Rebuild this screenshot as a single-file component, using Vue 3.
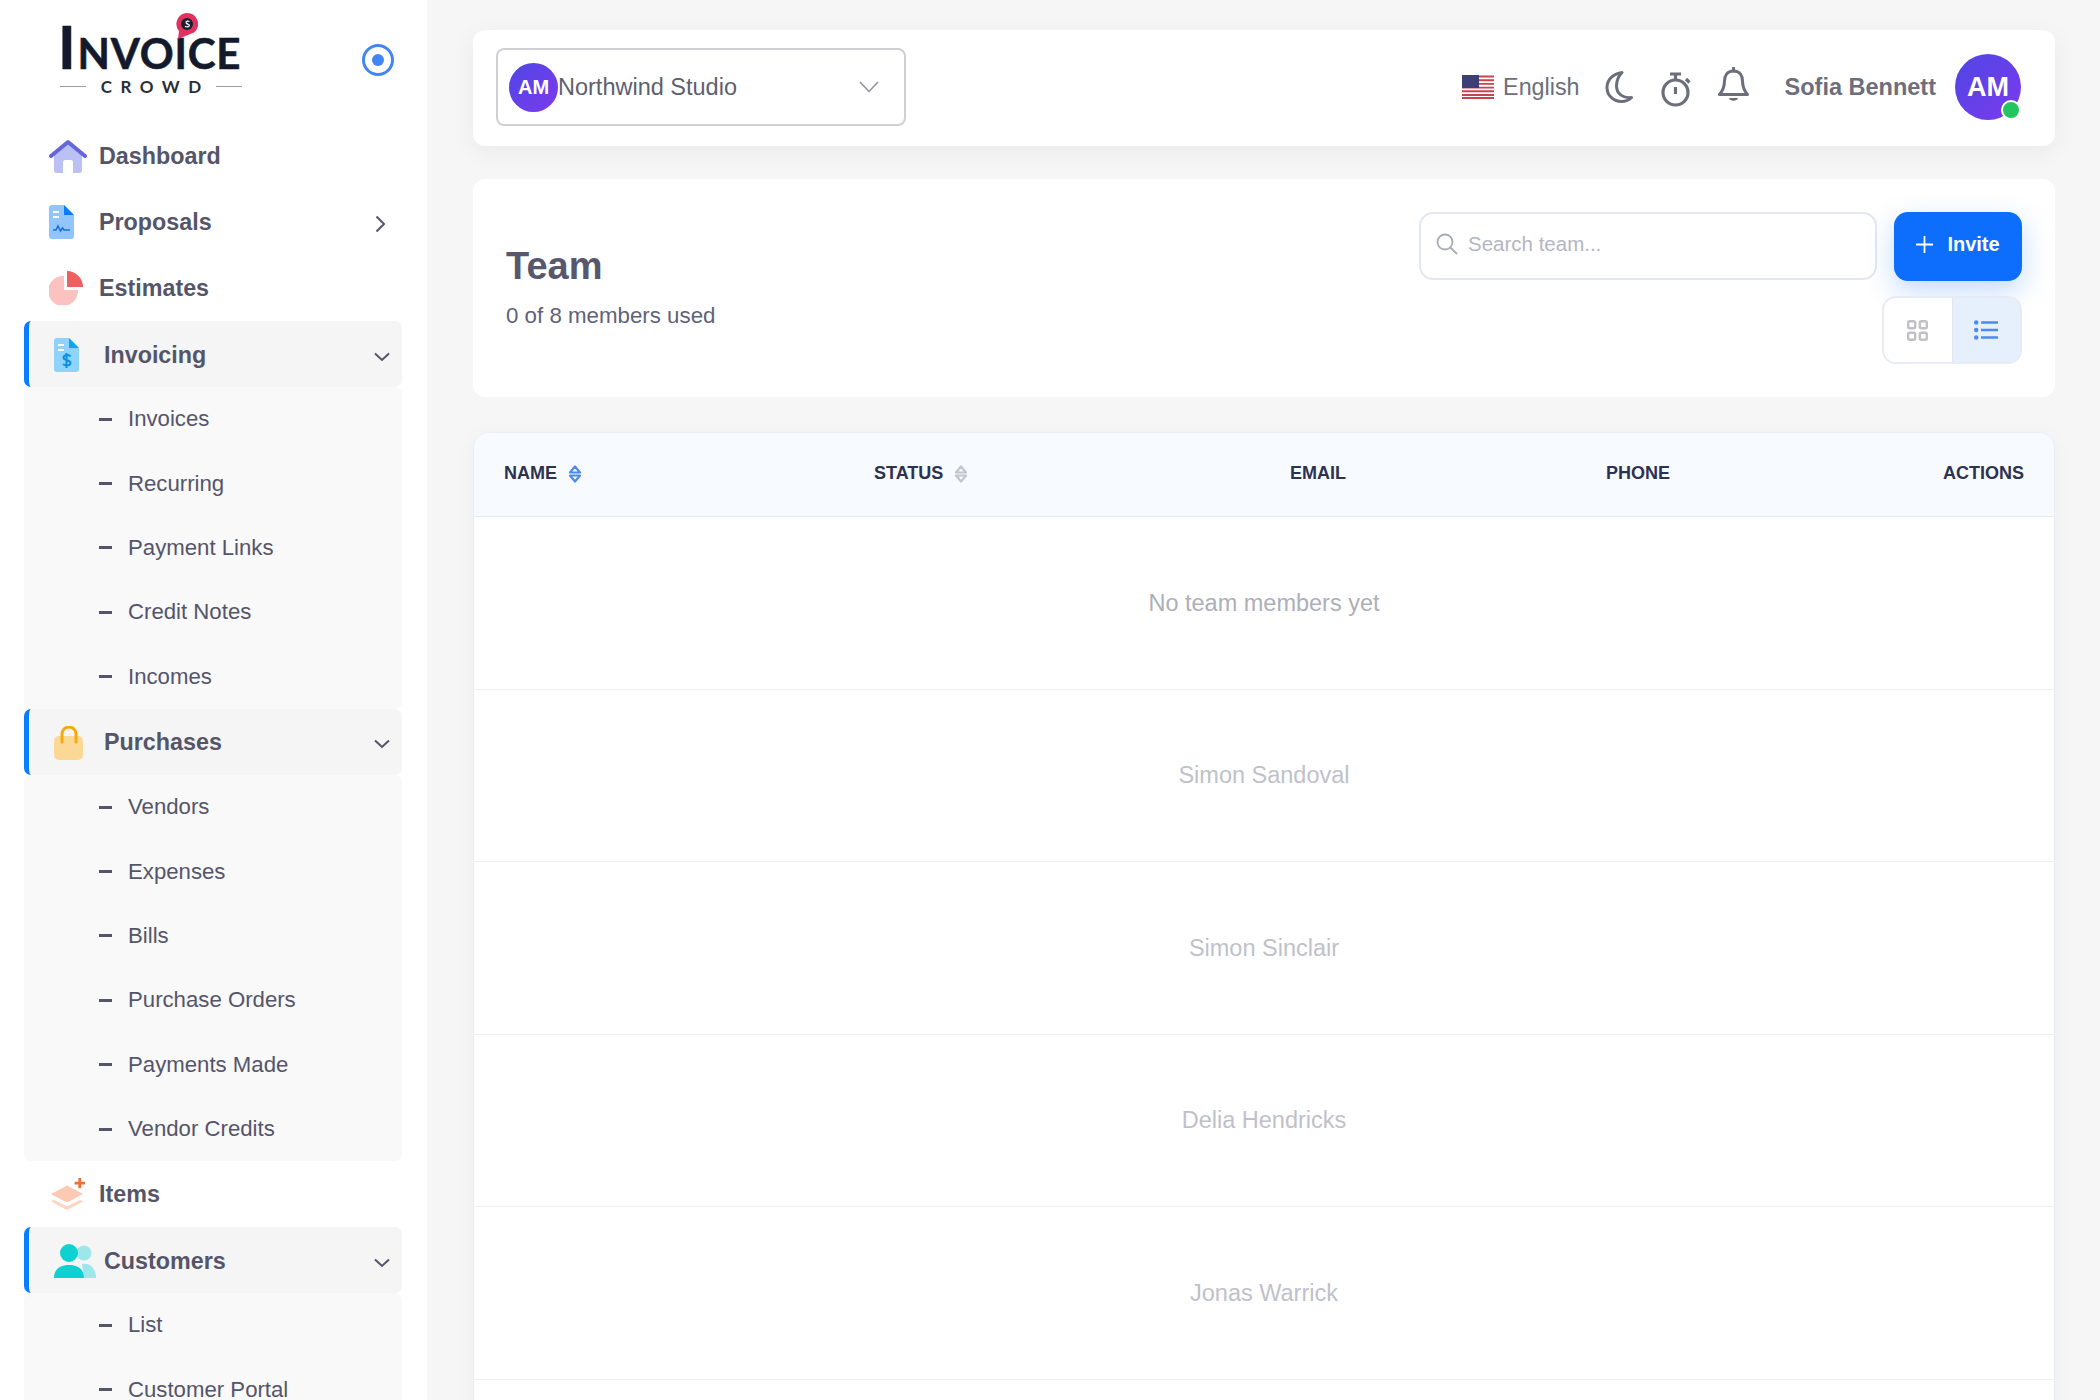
<script setup>
const nav = [
  { name: 'Dashboard', icon: 'home' },
  { name: 'Proposals', icon: 'proposal', arrow: true },
  { name: 'Estimates', icon: 'pie' },
  { name: 'Invoicing', icon: 'invoice', subs: ['Invoices', 'Recurring', 'Payment Links', 'Credit Notes', 'Incomes'] },
  { name: 'Purchases', icon: 'bag', subs: ['Vendors', 'Expenses', 'Bills', 'Purchase Orders', 'Payments Made', 'Vendor Credits'] },
  { name: 'Items', icon: 'layers' },
  { name: 'Customers', icon: 'users', subs: ['List', 'Customer Portal'] },
]

const rows = ['No team members yet', 'Simon Sandoval', 'Simon Sinclair', 'Delia Hendricks', 'Jonas Warrick', '']
</script>

<template>
  <div class="page">
    <aside class="sidebar">
      <div class="brand">
        <div class="logo">
          <svg class="pin" width="22" height="26" viewBox="0 0 22 26">
            <path d="M11 0a11 11 0 0 1 7 19.5L2 26l1-8A11 11 0 0 1 11 0z" fill="#e0315f" />
            <circle cx="11" cy="11" r="6" fill="#1b2030" />
            <path d="M13.5 8.500c-2-1-4 0-3.200 1.600.7 1.200 3.400.8 3 2.600-.4 1.500-3 1.400-4.300.5" fill="none" stroke="#fff" stroke-width="1.300" />
          </svg>
          <div class="logo-word"><span class="big">I</span>NVOICE</div>
          <div class="logo-sub"><i></i><span>CROWD</span><i></i></div>
        </div>
        <svg class="radio" width="34" height="34" viewBox="0 0 34 34">
          <circle cx="17" cy="17" r="14.500" fill="none" stroke="#4285f4" stroke-width="3" />
          <circle cx="17" cy="17" r="6" fill="#4285f4" />
        </svg>
      </div>

      <nav class="menu">
        <div v-for="item in nav" :key="item.name">
          <div class="row" :class="{ open: item.subs }">
            <span class="ico">
              <svg v-if="item.icon === 'home'" width="38" height="34" viewBox="0 0 38 34">
                <path d="M5 15 19 4l14 11v16a3 3 0 0 1-3 3h-6V23a2 2 0 0 0-2-2h-6a2 2 0 0 0-2 2v11H8a3 3 0 0 1-3-3z" fill="#bcc1f5" />
                <path d="M2 17 19 3l17 14" fill="none" stroke="#6467dc" stroke-width="4" stroke-linecap="round" stroke-linejoin="round" />
              </svg>
              <svg v-else-if="item.icon === 'proposal'" width="25" height="34" viewBox="0 0 25 34">
                <path d="M3 0h12l10 10v21a3 3 0 0 1-3 3H3a3 3 0 0 1-3-3V3a3 3 0 0 1 3-3z" fill="#93c5fd" />
                <path d="M15 0l10 10H15z" fill="#0a7cff" />
                <path d="M4 7h6M4 12h6" stroke="#fff" stroke-width="2" />
                <path d="M4 25h3l2-4 2.500 5 2-3 1.500 2h6" fill="none" stroke="#1a6fe0" stroke-width="1.600" />
              </svg>
              <svg v-else-if="item.icon === 'pie'" width="34" height="34" viewBox="0 0 34 34">
                <path d="M15 5v14h14A15 15 0 1 1 15 5z" fill="#fcc2c0" />
                <path d="M18 0a16 16 0 0 1 16 16H18z" fill="#ef5f5f" />
              </svg>
              <svg v-else-if="item.icon === 'invoice'" width="25" height="34" viewBox="0 0 25 34">
                <path d="M3 0h12l10 10v21a3 3 0 0 1-3 3H3a3 3 0 0 1-3-3V3a3 3 0 0 1 3-3z" fill="#8dd3fb" />
                <path d="M15 0l10 10H15z" fill="#0ea5f5" />
                <path d="M4 7h6M4 12h6" stroke="#fff" stroke-width="2" />
                <path d="M16.500 18.500c-1-2-7-2-7 1 0 3.500 7 2 7 5.500 0 3-6 3-7.500 1M12.500 15v15" fill="none" stroke="#0b8fe0" stroke-width="2" />
              </svg>
              <svg v-else-if="item.icon === 'bag'" width="30" height="34" viewBox="0 0 30 34">
                <rect x="0" y="10" width="29" height="24" rx="5" fill="#fcd896" />
                <path d="M8 16V8a7 7 0 0 1 14 0v8" fill="none" stroke="#f9a80e" stroke-width="3" stroke-linecap="round" />
              </svg>
              <svg v-else-if="item.icon === 'layers'" class="layers" width="34" height="34" viewBox="0 0 36 34">
                <path d="M17 9 34 18 17 27 0 18z" transform="translate(0 -1)" fill="#fcc9b2" />
                <path d="M3 23l14 7 14-7 3 2-17 9-17-9z" fill="#fcd5c3" />
                <path d="M29 0h3v4h4v3h-4v4h-3V7h-4V4h4z" fill="#f0703a" />
              </svg>
              <svg v-else width="42" height="34" viewBox="0 0 42 34">
                <circle cx="30" cy="9" r="7.500" fill="#9de6e9" />
                <path d="M28 20c8-2 14 5 14 14H30z" fill="#9de6e9" />
                <circle cx="15" cy="9" r="9" fill="#0ed1d1" />
                <path d="M0 34c0-9 6-13 15-13s15 4 15 13z" fill="#0ed1d1" />
              </svg>
            </span>
            <span class="label">{{ item.name }}</span>
            <svg v-if="item.arrow" class="arrow" width="11" height="18" viewBox="0 0 11 18">
              <path d="M1.500 1.500 9 9l-7.500 7.500" fill="none" stroke="#55556a" stroke-width="2" />
            </svg>
            <svg v-if="item.subs" class="chev" width="16" height="10" viewBox="0 0 16 10">
              <path d="M1 1.500 8 8l7-6.500" fill="none" stroke="#55556a" stroke-width="2" />
            </svg>
          </div>
          <ul v-if="item.subs" class="subs">
            <li v-for="sub in item.subs" :key="sub"><i></i>{{ sub }}</li>
          </ul>
        </div>
      </nav>
    </aside>

    <main class="main">
      <header class="topbar">
        <div class="org">
          <span class="org-av">AM</span>
          <span class="org-name">Northwind Studio</span>
          <svg class="org-chev" width="20" height="12" viewBox="0 0 20 12">
            <path d="M1 1l9 9.500L19 1" fill="none" stroke="#8e9099" stroke-width="1.500" />
          </svg>
        </div>
        <div class="tools">
          <svg class="flag" width="32" height="24" viewBox="0 0 32 24">
            <rect width="32" height="24" fill="#fff" />
            <path d="M0 1.500h32M0 5.200h32M0 8.900h32M0 12.600h32M0 16.300h32M0 20h32M0 23h32" stroke="#c8454f" stroke-width="1.900" />
            <rect width="17" height="13" fill="#3c3f73" />
          </svg>
          <span class="lang">English</span>
          <svg class="moon" width="28" height="32" viewBox="0 0 28 32">
            <path d="M17 1.500C9 2.500 2 8 2 16.500 2 25 9 30.500 16.500 30.500c4 0 7.500-1.500 10-4-8 1-15-3.500-15-11.500 0-6 2.500-10.500 5.500-13.500z" fill="none" stroke="#6d6e7c" stroke-width="3" stroke-linejoin="round" />
          </svg>
          <svg class="watch" width="31" height="35" viewBox="0 0 31 35">
            <circle cx="14.500" cy="20.500" r="12.500" fill="none" stroke="#6d6e7c" stroke-width="3.200" />
            <path d="M9 2h11M14.500 2v6M25 7l3.500 3.500M14.500 15v7" fill="none" stroke="#6d6e7c" stroke-width="3.200" />
          </svg>
          <svg class="bell" width="31" height="36" viewBox="0 0 31 36">
            <path d="M15.500 4C9 4 6.500 9 6.500 14c0 7-2 10-5 13.500h28c-3-3.500-5-6.500-5-13.500 0-5-2.500-10-9-10z" fill="none" stroke="#6d6e7c" stroke-width="3" stroke-linejoin="round" />
            <path d="M15.500 1v3" stroke="#6d6e7c" stroke-width="3" stroke-linecap="round" />
            <path d="M11 31h9c-.5 3.500-8.500 3.500-9 0z" fill="#6d6e7c" />
          </svg>
          <span class="user">Sofia Bennett</span>
          <span class="user-av">AM<b></b></span>
        </div>
      </header>

      <section class="head">
        <div class="title">
          <h1>Team</h1>
          <p>0 of 8 members used</p>
        </div>
        <div class="actions">
          <div class="action-row">
            <label class="search">
              <svg width="22" height="22" viewBox="0 0 22 22">
                <circle cx="9" cy="9" r="7.500" fill="none" stroke="#a9abb9" stroke-width="1.800" />
                <path d="M14.500 14.500 21 21" stroke="#a9abb9" stroke-width="1.800" />
              </svg>
              <input placeholder="Search team..." />
            </label>
            <button class="invite">
              <svg width="17" height="17" viewBox="0 0 17 17">
                <path d="M8.500 0v17M0 8.500h17" stroke="#fff" stroke-width="1.800" />
              </svg>
              Invite
            </button>
          </div>
          <div class="toggle">
            <span>
              <svg width="21" height="21" viewBox="0 0 21 21">
                <g fill="none" stroke="#c0c0c8" stroke-width="2.400">
                  <rect x="1.200" y="1.200" width="7" height="7" rx="1.500" />
                  <rect x="12.800" y="1.200" width="7" height="7" rx="1.500" />
                  <rect x="1.200" y="12.800" width="7" height="7" rx="1.500" />
                  <rect x="12.800" y="12.800" width="7" height="7" rx="1.500" />
                </g>
              </svg>
            </span>
            <span class="on">
              <svg width="24" height="20" viewBox="0 0 24 20">
                <path d="M7 2.500h17M7 10h17M7 17.500h17" stroke="#4d8af0" stroke-width="2.400" />
                <circle cx="2.200" cy="2.500" r="2.200" fill="#4d8af0" />
                <circle cx="2.200" cy="10" r="2.200" fill="#4d8af0" />
                <circle cx="2.200" cy="17.500" r="2.200" fill="#4d8af0" />
              </svg>
            </span>
          </div>
        </div>
      </section>

      <section class="table">
        <div class="thead">
          <span class="th">NAME
            <svg width="14" height="18" viewBox="0 0 14 18">
              <path d="M2 7.500 7 1.500l5 6zM2 10.500l5 6 5-6z" fill="none" stroke="#4d8af0" stroke-width="2.200" stroke-linejoin="round" />
            </svg>
          </span>
          <span class="th">STATUS
            <svg width="14" height="18" viewBox="0 0 14 18">
              <path d="M2 7.500 7 1.500l5 6zM2 10.500l5 6 5-6z" fill="none" stroke="#c2c4cf" stroke-width="2.200" stroke-linejoin="round" />
            </svg>
          </span>
          <span class="th">EMAIL</span>
          <span class="th">PHONE</span>
          <span class="th">ACTIONS</span>
        </div>
        <div v-for="(r, i) in rows" :key="i" class="trow" :class="{ first: i === 0 }">{{ r }}</div>
      </section>
    </main>
  </div>
</template>

<style scoped>
.page {
  display: flex;
  height: 1400px;
  overflow: hidden;
  background: #f6f6f7;
  font-family: "Liberation Sans", Arial, sans-serif;
}

.sidebar {
  width: 427px;
  flex-shrink: 0;
  background: #fff;
  padding: 0 25px 0 24px;
  box-sizing: border-box;
}

.brand {
  height: 123px;
  display: flex;
  justify-content: space-between;
  align-items: flex-start;
}

.logo {
  position: relative;
  margin: 17px 0 0 36px;
  width: 182px;
  color: #141a2b;
}

.pin {
  position: absolute;
  left: 116px;
  top: -4px;
}

.logo-word {
  font-family: Lato, sans-serif;
  font-weight: 700;
  font-size: 42px;
  line-height: 58px;
  height: 58px;
  white-space: nowrap;
  letter-spacing: 0.8px;
  margin-left: -2px;
  -webkit-text-stroke: 0.6px #141a2b;
}

.logo-word .big {
  font-size: 60px;
  line-height: 58px;
  margin-right: 1px;
}

.logo-sub {
  display: flex;
  align-items: center;
  justify-content: space-between;
  font-family: Lato, sans-serif;
  font-size: 17px;
  font-weight: 700;
  letter-spacing: 8.500px;
  margin-top: 1px;
  color: #2a2e38;
}

.logo-sub span {
  margin-right: -8.500px;
}

.logo-sub i {
  width: 26px;
  height: 1px;
  background: #9a9ca3;
}

.radio {
  margin: 43px 7px 0 0;
}

.row {
  display: flex;
  align-items: center;
  height: 66px;
  padding-left: 25px;
  padding-right: 12px;
  box-sizing: border-box;
  font-size: 23.300px;
  font-weight: 700;
  color: #55556a;
}

.row.open {
  background: #f5f5f6;
  border-left: 5px solid #0a7cff;
  border-radius: 7px;
  padding: 2px 12px 0 25px;
}

.ico {
  width: 50px;
  flex-shrink: 0;
  display: flex;
  align-items: center;
}

.layers {
  margin-left: 2px;
}

.arrow {
  margin: 4px 4px 0 auto;
}

.chev {
  margin: 3px 0 0 auto;
}

.subs {
  list-style: none;
  margin: 0;
  padding: 0;
  background: #f9f9f9;
  border-radius: 7px;
}

.subs li {
  display: flex;
  align-items: center;
  height: 64.400px;
  padding-left: 75px;
  font-size: 22.200px;
  color: #55556a;
}

.subs li i {
  width: 13px;
  height: 3px;
  background: #55556a;
  margin-right: 16px;
}

.main {
  flex: 1;
  min-width: 0;
  padding: 30px 45px 0 46px;
}

.topbar {
  height: 116px;
  background: #fff;
  border-radius: 12px;
  box-shadow: 0 6px 24px rgba(0, 0, 0, 0.05);
  display: flex;
  align-items: center;
  justify-content: space-between;
  padding: 0 34px 2px 23px;
  box-sizing: border-box;
}

.org {
  width: 410px;
  height: 78px;
  box-sizing: border-box;
  border: 2px solid #cfd0d6;
  border-radius: 8px;
  display: flex;
  align-items: center;
  padding: 0 25px 0 11px;
  font-size: 23.500px;
  color: #5e5f6e;
}

.org-av {
  width: 49px;
  height: 49px;
  border-radius: 50%;
  background: linear-gradient(135deg, #4f46e5, #7c3aed);
  color: #fff;
  font-size: 20px;
  font-weight: 700;
  display: flex;
  align-items: center;
  justify-content: center;
}

.org-chev {
  margin-left: auto;
}

.tools {
  display: flex;
  align-items: center;
  color: #6d6e7c;
}

.lang {
  font-size: 23.300px;
  margin: 0 25px 0 9px;
}

.watch {
  margin: 4px 0 0 28px;
}

.bell {
  margin: -4px 0 0 26px;
}

.user {
  font-size: 23.500px;
  font-weight: 700;
  margin: 0 19px 0 36px;
}

.user-av {
  position: relative;
  width: 66px;
  height: 66px;
  border-radius: 50%;
  background: linear-gradient(135deg, #4f46e5, #7c3aed);
  color: #fff;
  font-size: 27px;
  font-weight: 700;
  display: flex;
  align-items: center;
  justify-content: center;
}

.user-av b {
  position: absolute;
  right: 0;
  bottom: 0;
  width: 16px;
  height: 16px;
  background: #22c55e;
  border: 2px solid #fff;
  border-radius: 50%;
}

.head {
  margin-top: 33px;
  height: 218px;
  box-sizing: border-box;
  background: #fff;
  border-radius: 12px;
  display: flex;
  align-items: center;
  justify-content: space-between;
  padding: 0 33px;
}

.title {
  padding-bottom: 3px;
}

.head h1 {
  margin: 0;
  font-size: 38px;
  line-height: 44px;
  color: #57576e;
}

.head p {
  margin: 15px 0 0;
  font-size: 22.300px;
  line-height: 26px;
  color: #5f6379;
}

.actions {
  display: flex;
  flex-direction: column;
  align-items: flex-end;
  gap: 15px;
}

.action-row {
  display: flex;
  gap: 17px;
}

.search {
  width: 458px;
  height: 68px;
  box-sizing: border-box;
  border: 2px solid #e3e7f1;
  border-radius: 14px;
  display: flex;
  align-items: center;
  gap: 10px;
  padding: 0 0 4px 15px;
}

.search input {
  border: 0;
  outline: 0;
  flex: 1;
  min-width: 0;
  padding: 0;
  background: transparent;
  font: 20.500px "Liberation Sans", Arial, sans-serif;
  color: #555570;
}

.search input::placeholder {
  color: #b4b6c2;
  opacity: 1;
}

.invite {
  width: 128px;
  height: 69px;
  border: 0;
  border-radius: 14px;
  background: #0d6efd;
  box-shadow: 0 10px 28px rgba(13, 110, 253, 0.25);
  color: #fff;
  font: 700 20px "Liberation Sans", Arial, sans-serif;
  display: flex;
  align-items: center;
  justify-content: center;
  gap: 14px;
  padding: 0 0 4px;
}

.toggle {
  width: 140px;
  height: 68px;
  box-sizing: border-box;
  border: 2px solid #e8ebf3;
  border-radius: 14px;
  overflow: hidden;
  display: flex;
}

.toggle span {
  flex: 1;
  display: flex;
  align-items: center;
  justify-content: center;
  background: #fff;
}

.toggle span.on {
  background: #e6effc;
  border-left: 1px solid #e4e6ee;
}

.table {
  margin-top: 35px;
  background: #fff;
  border: 1px solid #e9edf5;
  border-radius: 16px 16px 0 0;
  box-shadow: 0 4px 20px rgba(0, 0, 0, 0.04);
  box-sizing: border-box;
}

.thead {
  display: grid;
  grid-template-columns: 370px 416px 316px 1fr auto;
  align-items: center;
  height: 84px;
  padding: 0 30px 2px 30px;
  background: #f7faff;
  border-bottom: 1px solid #e5e9f2;
  border-radius: 16px 16px 0 0;
  box-sizing: border-box;
}

.th {
  display: flex;
  align-items: center;
  gap: 11px;
  font-size: 18px;
  font-weight: 700;
  color: #2d3250;
}

.trow {
  height: 172.500px;
  box-sizing: border-box;
  border-bottom: 1.500px solid #eef0f4;
  display: flex;
  align-items: center;
  justify-content: center;
  padding-top: 1px;
  font-size: 23.500px;
  color: #bfc1ca;
}

.trow.first {
  color: #adafb9;
}
</style>

<style>
html, body {
  margin: 0;
  background: #f6f6f7;
}
</style>
